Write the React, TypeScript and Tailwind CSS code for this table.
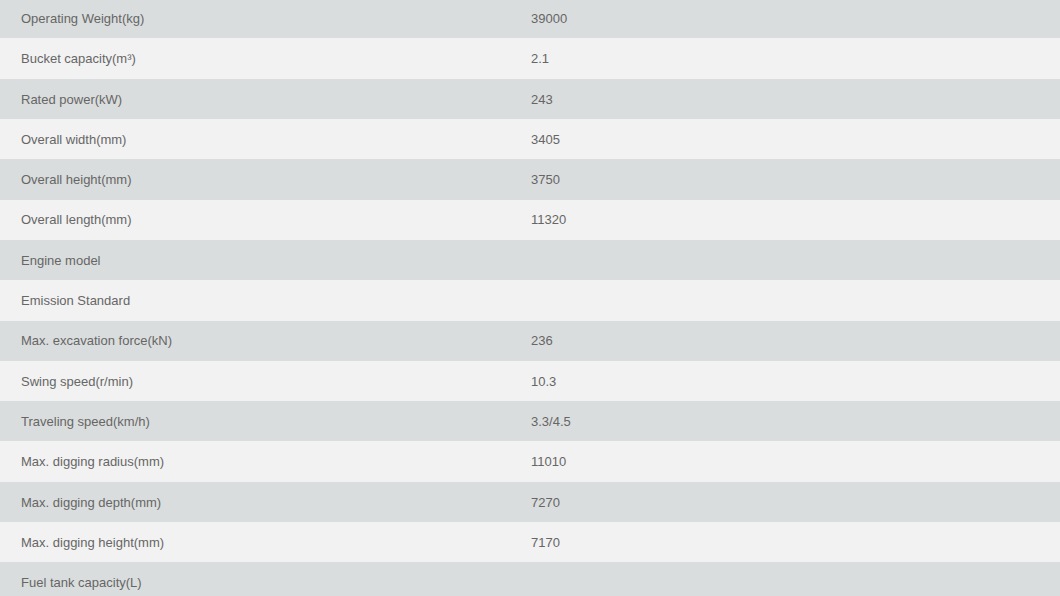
const rows: [string, string][] = [
  ["Operating Weight(kg)", "39000"],
  ["Bucket capacity(m³)", "2.1"],
  ["Rated power(kW)", "243"],
  ["Overall width(mm)", "3405"],
  ["Overall height(mm)", "3750"],
  ["Overall length(mm)", "11320"],
  ["Engine model", ""],
  ["Emission Standard", ""],
  ["Max. excavation force(kN)", "236"],
  ["Swing speed(r/min)", "10.3"],
  ["Traveling speed(km/h)", "3.3/4.5"],
  ["Max. digging radius(mm)", "11010"],
  ["Max. digging depth(mm)", "7270"],
  ["Max. digging height(mm)", "7170"],
  ["Fuel tank capacity(L)", ""],
];

export default function App() {
  return (
    <div className="w-[1060px] h-[596px] overflow-hidden bg-white">
      <div className="-mt-[2px] flex flex-col text-[13px] text-[#666666] [font-family:'Liberation_Sans',Arial,sans-serif]">
        {rows.map(([k, v], i) => (
          <div
            key={k}
            className={`grid grid-cols-[510px_1fr] h-[40.32px] items-center ${i % 2 === 0 ? "bg-[#dadddd]" : "bg-[#f2f2f2]"}`}
          >
            <div className="pl-[21px] pt-px">{k}</div>
            <div className="pl-[21px] pt-px">{v}</div>
          </div>
        ))}
      </div>
    </div>
  );
}
